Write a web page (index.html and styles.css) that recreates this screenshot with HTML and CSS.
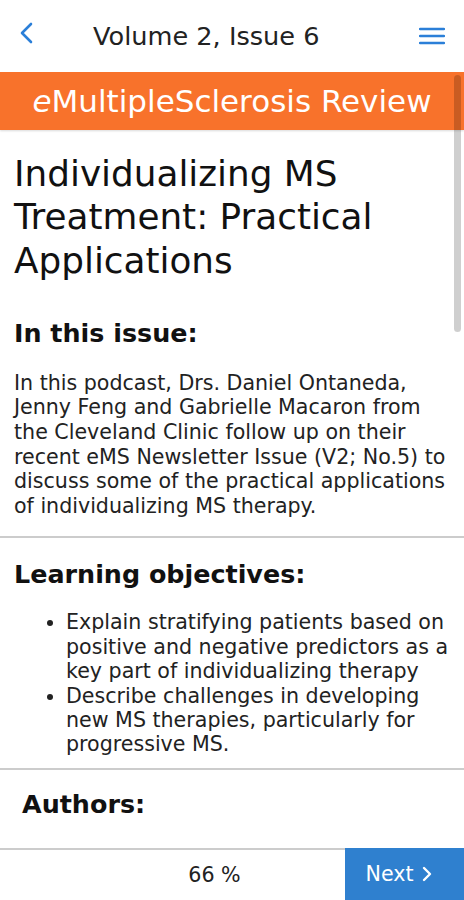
FILE: index.html
```html
<!DOCTYPE html>
<html lang="en">
<head>
  <meta charset="UTF-8">
  <meta name="viewport" content="width=device-width, initial-scale=1.0">
  <title>Volume 2, Issue 6</title>
  <link rel="stylesheet" href="styles.css">
</head>
<body>

  <header class="topbar">
    <a class="back" href="#">
      <svg width="16" height="22" viewBox="0 0 16 22"><path d="M13 2 L4 11 L13 20" fill="none" stroke="#2b7fd8" stroke-width="2.6" stroke-linecap="round" stroke-linejoin="round"/></svg>
    </a>
    <div class="topbar-title">Volume 2, Issue 6</div>
    <a class="menu" href="#">
      <svg width="26" height="18" viewBox="0 0 26 18"><path d="M1 2 H25 M1 9 H25 M1 16 H25" stroke="#2b7fd8" stroke-width="2.4" stroke-linecap="round"/></svg>
    </a>
  </header>

  <main class="page">
    <div class="banner"><i>e</i>MultipleSclerosis Review</div>

    <div class="scroll-thumb"></div>

    <h1 class="article-title">Individualizing MS Treatment: Practical Applications</h1>

    <section class="block">
      <h2>In this issue:</h2>
      <p>In this podcast, Drs. Daniel Ontaneda, Jenny Feng and Gabrielle Macaron from the Cleveland Clinic follow up on their recent eMS Newsletter Issue (V2; No.5) to discuss some of the practical applications of individualizing MS therapy.</p>
    </section>

    <section class="block">
      <h2>Learning objectives:</h2>
      <ul>
        <li>Explain stratifying patients based on positive and negative predictors as a key part of individualizing therapy</li>
        <li>Describe challenges in developing new MS therapies, particularly for progressive MS.</li>
      </ul>
    </section>

    <section class="block authors">
      <h2>Authors:</h2>
    </section>
  </main>

  <footer class="bottombar">
    <div class="progress">66 %</div>
    <a class="next" href="#">Next
      <svg width="12" height="16" viewBox="0 0 12 16"><path d="M3 2 L9 8 L3 14" fill="none" stroke="#fff" stroke-width="2.4" stroke-linecap="round" stroke-linejoin="round"/></svg>
    </a>
  </footer>

</body>
</html>
```

FILE: styles.css
```css
body {
  font-family: "DejaVu Sans", Verdana, sans-serif;
  margin: 0;
  padding: 0;
  background-color: #fff;
  color: #111;
  width: 464px;
  height: 900px;
  overflow: hidden;
  display: flex;
  flex-direction: column;
}

a {
  text-decoration: none;
}

.topbar {
  height: 72px;
  display: flex;
  align-items: center;
  flex-shrink: 0;
}

.back {
  width: 93px;
  padding-left: 18px;
  box-sizing: border-box;
  display: flex;
  align-items: center;
  margin-top: -6px;
}

.topbar-title {
  flex: 1;
  font-size: 25.6px;
  color: #222;
  margin-top: -1px;
}

.menu {
  padding-right: 19px;
  display: flex;
  margin-top: -1px;
}

.page {
  flex: 1;
  position: relative;
  overflow: hidden;
}

.banner {
  height: 58px;
  background-color: #f8722b;
  color: #fff;
  font-size: 31px;
  line-height: 58px;
  text-align: center;
  box-shadow: 0 1px 2px rgba(0, 0, 0, 0.15);
}

.scroll-thumb {
  position: absolute;
  top: 3px;
  right: 3px;
  width: 7px;
  height: 257px;
  border-radius: 4px;
  background-color: rgba(0, 0, 0, 0.19);
}

.article-title {
  font-size: 35.8px;
  font-weight: normal;
  line-height: 43.3px;
  margin: 22px 14px 0;
}

.block {
  padding: 36px 14px 18px;
  border-bottom: 2px solid #ccc;
}

.block + .block {
  padding-top: 21px;
}

.block h2 {
  font-size: 25.4px;
  font-weight: bold;
  margin: 0;
}

.block p {
  font-size: 20.6px;
  line-height: 24.6px;
  color: #222;
  margin: 23px 0 0;
}

.block ul {
  font-size: 20.6px;
  line-height: 24.4px;
  color: #222;
  margin: 21px 0 0;
  padding-left: 52px;
  padding-bottom: 0;
}

.block:nth-of-type(2) {
  padding-bottom: 11px;
}

.authors {
  border-bottom: none;
  padding-left: 22px;
  padding-top: 19px !important;
}

.bottombar {
  height: 52px;
  flex-shrink: 0;
  display: flex;
  border-top: 2px solid #ccc;
  box-sizing: border-box;
}

.progress {
  flex: 1;
  font-size: 20.6px;
  color: #222;
  display: flex;
  align-items: center;
  justify-content: center;
  padding-left: 84px;
}

.next {
  width: 119px;
  background-color: #2f80cf;
  color: #fff;
  font-size: 20.6px;
  display: flex;
  align-items: center;
  justify-content: center;
  gap: 8px;
  padding-right: 10px;
  box-sizing: border-box;
  margin-top: -2px;
}
```
